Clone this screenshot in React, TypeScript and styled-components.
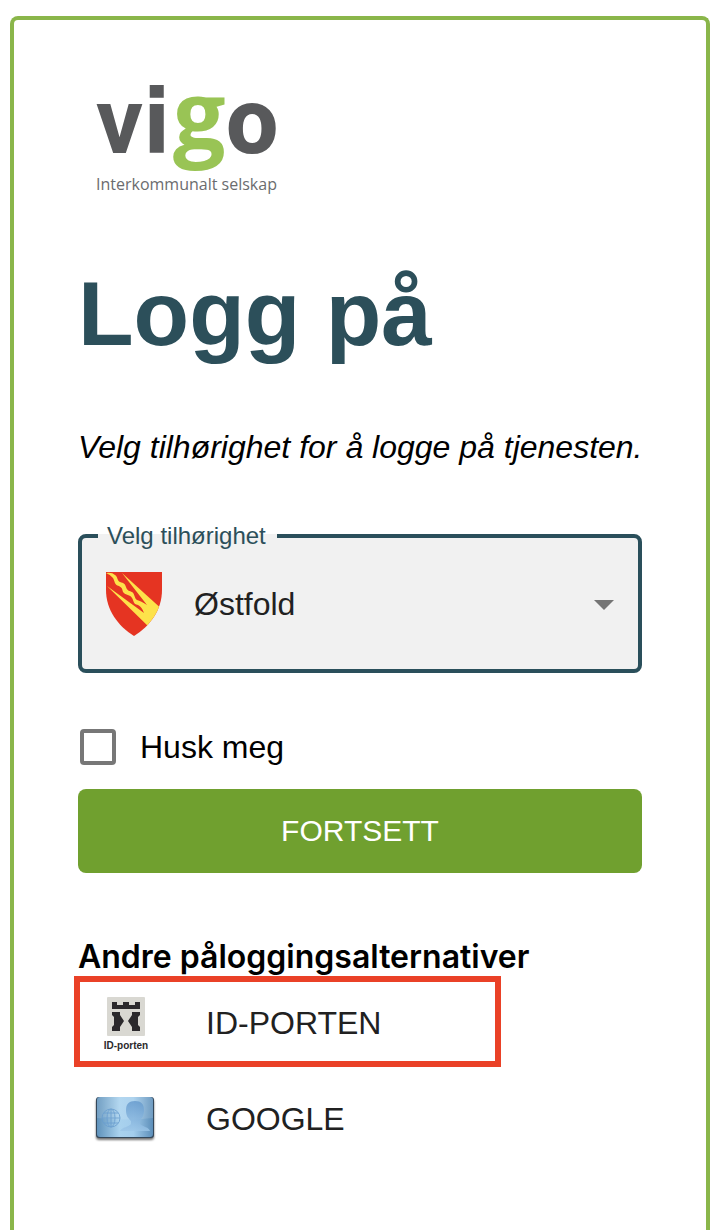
import React, { useState } from "react";
import styled, { createGlobalStyle } from "styled-components";

const sans = '"Liberation Sans", Helvetica, Arial, sans-serif';

const GlobalStyle = createGlobalStyle`
  *, *::before, *::after { box-sizing: border-box; }
  body { margin: 0; background: #fff; color: #000; font-family: ${sans}; }
  button, input, select { font: inherit; color: inherit; }
`;

const Page = styled.div`
  display: flex;
  flex-direction: column;
  min-height: 100vh;
  padding: 16px 11px 0 10px;
`;

const Card = styled.main`
  flex: 1;
  display: flex;
  flex-direction: column;
  padding: 64px;
  border: 4px solid #8ab64a;
  border-bottom: 0;
  border-radius: 8px 8px 0 0;
`;

const Logo = styled.svg`
  display: block;
  width: 216px;
  height: 128px;
  overflow: visible;
`;

const Title = styled.h1`
  margin: 46px 0 0;
  color: #2c4f5a;
  font-size: 91px;
  line-height: 112px;
  font-weight: 700;
`;

const Intro = styled.p`
  margin: 55px 0 0;
  font-size: 32px;
  line-height: 44px;
  font-style: italic;
  white-space: nowrap;
`;

const Field = styled.fieldset`
  min-width: 0;
  margin: 53px 0 0;
  padding: 0;
  border: 4px solid #2a4f5b;
  border-radius: 8px;
  background: #f1f1f1;
`;

const Legend = styled.legend`
  margin-left: 16px;
  padding: 0 11px 0 9px;
  color: #2c4f5a;
  font-size: 24px;
  line-height: 28px;
`;

const SelectWrap = styled.div`
  position: relative;
`;

const Select = styled.select`
  display: block;
  width: 100%;
  height: 119px;
  padding: 0 64px 12px 112px;
  border: 0;
  outline: 0;
  appearance: none;
  background: transparent;
  color: #212121;
  font-size: 32px;
`;

const Shield = styled.svg`
  position: absolute;
  left: 24px;
  top: 22px;
  width: 56px;
  height: 64px;
  pointer-events: none;
`;

const Arrow = styled.svg`
  position: absolute;
  right: 24px;
  top: 50px;
  width: 20px;
  height: 10px;
  pointer-events: none;
`;

const Remember = styled.label`
  display: flex;
  align-items: center;
  gap: 24px;
  align-self: flex-start;
  margin-top: 52px;
  padding-left: 2px;
  font-size: 32px;
  line-height: 44px;
`;

const Checkbox = styled.input`
  width: 36px;
  height: 36px;
  margin: 0;
  border: 4px solid #777;
  border-radius: 4px;
  appearance: none;
  background: #fff;
  &:checked { background: #70a02f; }
`;

const Submit = styled.button`
  height: 84px;
  margin-top: 20px;
  border: 0;
  border-radius: 8px;
  background: #70a02f;
  color: #fff;
  font-size: 30px;
`;

const Subheading = styled.h2`
  margin: 65px 0 0;
  font-family: Inter, ${sans};
  font-size: 32px;
  line-height: 38px;
  font-weight: 600;
`;

const Options = styled.ul`
  margin: -1px 0 0;
  padding: 0;
  list-style: none;
`;

const Option = styled.li<{ $marked?: boolean }>`
  position: relative;
  width: 75%;
  height: 96px;
  &::after {
    content: "";
    display: ${(p) => (p.$marked ? "block" : "none")};
    position: absolute;
    inset: 1px 0 4px -4px;
    border: 6px solid #ea4127;
    pointer-events: none;
  }
`;

const OptionButton = styled.button`
  display: flex;
  align-items: center;
  gap: 48px;
  width: 100%;
  height: 100%;
  padding: 0 16px;
  border: 0;
  background: transparent;
  color: #212121;
  font-size: 32px;
  text-align: left;
`;

const OptionIcon = styled.svg`
  flex: none;
  width: 64px;
  height: 64px;
`;

function VigoLogo() {
  return (
    <Logo viewBox="0 0 216 128" role="img" aria-label="vigo Interkommunalt selskap">
      <g fill="#58595b">
        <text x="18" y="69" fontSize="93" fontWeight="700" fontFamily="Roboto, sans-serif">v</text>
        <text x="65" y="69" fontSize="89" fontWeight="700" fontFamily="'DejaVu Sans Condensed', 'DejaVu Sans', sans-serif">i</text>
        <text x="148" y="69" fontSize="93" fontWeight="800" fontFamily="Roboto, sans-serif">o</text>
      </g>
      <text x="95" y="65" fontSize="93" fontWeight="700" fill="#99c455" fontFamily="'Open Sans', sans-serif">g</text>
      <text x="18" y="106" fontSize="16" fill="#6b6c6e" fontFamily="'Open Sans', sans-serif">Interkommunalt selskap</text>
    </Logo>
  );
}

function IdPortenIcon() {
  return (
    <OptionIcon viewBox="0 0 64 64" aria-hidden="true">
      <rect x="13" y="6" width="38" height="39" rx="1" fill="#d9d8d2" />
      <path
        fill="#2b292c"
        d="M18 11h5v3h6v-3h6v3h6v-3h5v7H18zM18 21h8v3l4 6-4 6v4h-8v-4l2-2v-8l-2-2zM46 21h-8v3l-4 6 4 6v4h8v-4l-2-2v-8l2-2z"
      />
      <text x="32" y="58" textAnchor="middle" fontSize="10" fontWeight="700" fill="#2b292c" fontFamily={sans}>
        ID-porten
      </text>
    </OptionIcon>
  );
}

function CardIcon() {
  return (
    <OptionIcon viewBox="0 0 64 64" aria-hidden="true">
      <defs>
        <linearGradient id="sheen" x1="0" x2="1">
          <stop offset="0" stopColor="#5f92bb" />
          <stop offset=".4" stopColor="#a9d2ee" />
          <stop offset=".65" stopColor="#a3cdec" />
          <stop offset="1" stopColor="#5c8eb9" />
        </linearGradient>
        <linearGradient id="person" x1="0" x2="0" y1="0" y2="1">
          <stop offset="0" stopColor="#6398cc" />
          <stop offset="1" stopColor="#9cc6e8" />
        </linearGradient>
        <filter id="drop" x="-10%" y="-10%" width="120%" height="130%">
          <feGaussianBlur stdDeviation="1" />
        </filter>
      </defs>
      <rect x="2" y="12" width="58" height="41" rx="3" fill="#000" opacity=".55" filter="url(#drop)" />
      <rect x="2" y="10" width="58" height="41" rx="3" fill="#33475a" />
      <rect x="3" y="10" width="56" height="40" rx="3" fill="url(#sheen)" />
      <path d="M3 31q28 3 56 0V13q0-3-3-3H6q-3 0-3 3z" fill="#fff" opacity=".12" />
      <path
        fill="url(#person)"
        opacity=".8"
        d="M32 23c0-6 3-9 9-9s9 3 9 9c0 6-2 8-4 11v3c3 3 9 3 10 7H26c2-4 9-4 11-7v-3c-3-3-5-5-5-11z"
      />
      <g fill="none" stroke="#6a9ecf" strokeWidth="1" opacity=".85">
        <circle cx="17" cy="31" r="9" />
        <ellipse cx="17" cy="31" rx="4" ry="9" />
        <path d="M17 22v18M8 31h18M10 26h14M10 36h14" />
      </g>
    </OptionIcon>
  );
}

export default function App() {
  const [county, setCounty] = useState("Østfold");
  const [remember, setRemember] = useState(false);

  return (
    <Page>
      <GlobalStyle />
      <Card>
        <VigoLogo />
        <Title>Logg på</Title>
        <Intro>Velg tilhørighet for å logge på tjenesten.</Intro>
        <Field>
          <Legend>
            <label htmlFor="county">Velg tilhørighet</label>
          </Legend>
          <SelectWrap>
            <Select id="county" value={county} onChange={(e) => setCounty(e.target.value)}>
              <option>Østfold</option>
            </Select>
            <Shield viewBox="0 0 56 64" aria-hidden="true">
              <clipPath id="shield-edge">
                <path d="M0 0h56v18c0 20-12 36-28 46C12 54 0 38 0 18z" />
              </clipPath>
              <g clipPath="url(#shield-edge)">
                <path d="M0 0h56v64H0z" fill="#e53422" />
                <path
                  fill="#fde24a"
                  d="M16 1 60 41 46 58 1 14 38 41Q36 35 32 33C27 32 28 29 26 26C24 22 20 24 17 20C16 16 16 16 13 14C8 13 9 9 7 6Q5 3 0 1Q6 0 9 3C12 5 11 9 14 10C18 11 19 12 20 15C21 19 24 19 26 20C29 22 28 26 31 28Q35 29 41 33z"
                />
              </g>
            </Shield>
            <Arrow viewBox="0 0 20 10" aria-hidden="true">
              <path d="M0 0h20L10 10z" fill="#757575" />
            </Arrow>
          </SelectWrap>
        </Field>
        <Remember>
          <Checkbox type="checkbox" checked={remember} onChange={(e) => setRemember(e.target.checked)} />
          Husk meg
        </Remember>
        <Submit type="button">FORTSETT</Submit>
        <Subheading>Andre påloggingsalternativer</Subheading>
        <Options>
          <Option $marked>
            <OptionButton type="button">
              <IdPortenIcon />
              ID-PORTEN
            </OptionButton>
          </Option>
          <Option>
            <OptionButton type="button">
              <CardIcon />
              GOOGLE
            </OptionButton>
          </Option>
        </Options>
      </Card>
    </Page>
  );
}
